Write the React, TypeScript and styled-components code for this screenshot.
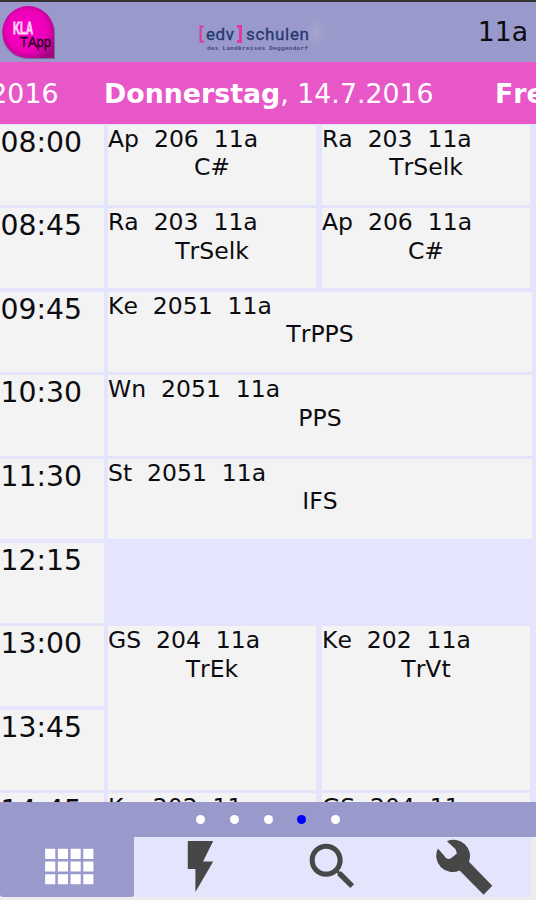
import { useState } from 'react';
import styled, { createGlobalStyle } from 'styled-components';

const GlobalStyle = createGlobalStyle`
  body {
    margin: 0;
    overflow: hidden;
    background-color: #ecebee;
    font-family: 'DejaVu Sans', sans-serif;
    font-kerning: none;
  }
`;
const Page = styled.div`
  display: flex;
  flex-direction: column;
  width: 536px;
  height: 900px;
  overflow: hidden;
  color: #0c0c10;
`;
const Header = styled.header`
  display: flex;
  align-items: center;
  box-sizing: border-box;
  height: 62px;
  flex-shrink: 0;
  border-top: 2px solid #35332f;
  padding-right: 8px;
  background-color: #9999cb;
`;
const AppLogo = styled.svg`
  width: 58px;
  height: 60px;
`;
const SchoolLogo = styled.svg`
  width: 150px;
  height: 60px;
  margin-left: 132px;
`;
const ClassName = styled.span`
  margin-left: auto;
  font-size: 26.7px;
  line-height: 60px;
`;
const DayBar = styled.div`
  display: flex;
  height: 62px;
  flex-shrink: 0;
  overflow: hidden;
  background-color: #e857c8;
  color: #fff;
  font-size: 26.8px;
  line-height: 63px;
  white-space: nowrap;
`;
const PrevDay = styled.div`
  display: flex;
  justify-content: flex-end;
  width: 58.5px;
  flex-shrink: 0;
`;
const CurrentDay = styled.div`
  width: 391px;
  flex-shrink: 0;
  padding-left: 45.5px;
  box-sizing: border-box;
`;
const NextDay = styled.div`
  padding-left: 45.5px;
`;
const Table = styled.div`
  display: grid;
  grid-template-columns: 108px 214px 210px;
  grid-auto-rows: 83.6px;
  flex: 1;
  min-height: 0;
  overflow: hidden;
  padding-top: 0.7px;
  background-color: #e4e4fc;
`;
const Time = styled.div<{ $row: number }>`
  grid-column: 1;
  grid-row: ${({ $row }) => $row};
  margin: 0 4px 3.5px 0;
  padding: 1px 0 0 0.5px;
  background-color: #f3f3f3;
  font-size: 28.3px;
  line-height: 34px;
`;
const Lesson = styled.div<{ $row: number; $col: number; $wide?: boolean; $span?: number }>`
  grid-column: ${({ $col, $wide }) => `${$col} / span ${$wide ? 2 : 1}`};
  grid-row: ${({ $row, $span }) => `${$row} / span ${$span || 1}`};
  margin-right: ${({ $col, $wide }) => ($wide ? 0 : $col === 2 ? 6 : 2)}px;
  margin-bottom: 3.5px;
  background-color: #f3f3f3;
  font-size: 23.5px;
  line-height: 28.2px;
`;
const Info = styled.div`
  white-space: pre;
`;
const Subject = styled.div`
  padding-top: 0.2px;
  text-align: center;
`;
const Pager = styled.div`
  display: flex;
  align-items: center;
  justify-content: center;
  gap: 24.6px;
  height: 35px;
  flex-shrink: 0;
  background-color: #9999cb;
`;
const Dot = styled.span<{ $active: boolean }>`
  width: 9px;
  height: 9px;
  border-radius: 50%;
  background-color: ${({ $active }) => ($active ? '#0000fa' : '#fff')};
`;
const TabBar = styled.nav`
  display: grid;
  grid-template-columns: 134px 1fr 1fr 1fr;
  width: 531px;
  height: 60px;
  flex-shrink: 0;
  margin-bottom: 3px;
  background-color: #e4e4fc;
`;
const Tab = styled.button<{ $active: boolean }>`
  display: flex;
  align-items: center;
  justify-content: center;
  box-sizing: border-box;
  height: 60px;
  border: none;
  border-radius: 0 0 3px 3px;
  padding: 0 0 2px;
  cursor: pointer;
  background-color: ${({ $active }) => ($active ? '#9999cb' : 'transparent')};
  color: ${({ $active }) => ($active ? '#fff' : '#474747')};

  svg {
    width: 61px;
    height: 61px;
    flex-shrink: 0;
    fill: currentColor;
  }
`;

const times = ['08:00', '08:45', '09:45', '10:30', '11:30', '12:15', '13:00', '13:45', '14:45'];

const lessons = [
  { row: 1, col: 2, info: 'Ap  206  11a', subject: 'C#' },
  { row: 1, col: 3, info: 'Ra  203  11a', subject: 'TrSelk' },
  { row: 2, col: 2, info: 'Ra  203  11a', subject: 'TrSelk' },
  { row: 2, col: 3, info: 'Ap  206  11a', subject: 'C#' },
  { row: 3, col: 2, wide: true, info: 'Ke  2051  11a', subject: 'TrPPS' },
  { row: 4, col: 2, wide: true, info: 'Wn  2051  11a', subject: 'PPS' },
  { row: 5, col: 2, wide: true, info: 'St  2051  11a', subject: 'IFS' },
  { row: 7, col: 2, span: 2, info: 'GS  204  11a', subject: 'TrEk' },
  { row: 7, col: 3, span: 2, info: 'Ke  202  11a', subject: 'TrVt' },
  { row: 9, col: 2, info: 'Ke  202  11a', subject: '' },
  { row: 9, col: 3, info: 'GS  204  11a', subject: '' },
];

const tabs = [
  { name: 'table', box: '-0.2 0 24 24', path: 'M3 9h4V5H3zm0 5h4v-4H3zm5 0h4v-4H8zm5 0h4v-4h-4zM8 9h4V5H8zm5-4v4h4V5zm5 9h4v-4h-4zM3 19h4v-4H3zm5 0h4v-4H8zm5 0h4v-4h-4zm5 0h4v-4h-4zm0-14v4h4V5z' },
  { name: 'news', box: '0 0 24 24', path: 'M7 2v11h3v9l7-12h-4l4-8z' },
  { name: 'search', box: '0 0 24 24', path: 'M15.5 14h-.79l-.28-.27C15.41 12.59 16 11.11 16 9.5 16 5.91 13.09 3 9.5 3S3 5.91 3 9.5 5.91 16 9.5 16c1.61 0 3.09-.59 4.23-1.57l.27.28v.79l5 4.99L20.49 19zm-6 0C7.01 14 5 11.99 5 9.5S7.01 5 9.5 5 14 7.01 14 9.5 11.99 14 9.5 14z' },
  { name: 'settings', box: '13.2 10.5 183 183', path: 'M25 48L45 71Q50 83 63 78L82 63L78 50L52 26A49 49 0 0 1 118 88L188 160L162 187L90 114A49 49 0 0 1 25 48z' },
];

const App = () => {
  const [tab, setTab] = useState('table');
  const [day] = useState(3);

  return (
    <Page>
      <GlobalStyle />
      <Header>
        <AppLogo viewBox='0 2 58 60'>
          <defs>
            <radialGradient id='drop' cx='48%' cy='48%' r='60%'>
              <stop offset='0' stopColor='#f800c8' />
              <stop offset='0.65' stopColor='#ee00b8' />
              <stop offset='1' stopColor='#a0087e' />
            </radialGradient>
          </defs>
          <path d='M28 7a26 26 0 1 0 0 52h27V33A26.5 26 0 0 0 28 7z' fill='#66467f' opacity='0.6' />
          <path d='M28 6a25.5 26 0 1 0 0 52h26V32A26 26 0 0 0 28 6z' fill='url(#drop)' />
          <text x='13' y='33.5' fontSize='16' fontWeight='bold' fill='#fbd5f5' stroke='#fbd5f5' strokeWidth='0.8' textLength='20' lengthAdjust='spacingAndGlyphs' fontFamily='Liberation Sans, sans-serif'>KLA</text>
          <text x='20' y='46.5' fontSize='14' fill='#23001c' stroke='#23001c' strokeWidth='0.4' textLength='31' lengthAdjust='spacingAndGlyphs' fontFamily='Liberation Sans, sans-serif'>TApp</text>
        </AppLogo>
        <SchoolLogo viewBox='190 2 150 60'>
          <defs>
            <radialGradient id='glow'>
              <stop offset='0' stopColor='#adabd2' stopOpacity='0.7' />
              <stop offset='1' stopColor='#9999cb' stopOpacity='0' />
            </radialGradient>
          </defs>
          <ellipse cx='316' cy='32' rx='16' ry='26' fill='url(#glow)' />
          <path d='M204 26.5h-3.5v15h3.5' fill='none' stroke='#e0389f' strokeWidth='2' />
          <path d='M237 26.5h3.5v15H237' fill='none' stroke='#e0389f' strokeWidth='3' />
          <text x='206' y='39.5' fontSize='17' fill='#24386f' stroke='#24386f' strokeWidth='0.3' textLength='28' fontFamily='Roboto, sans-serif'>edv</text>
          <text x='246' y='39.5' fontSize='17' fill='#24386f' stroke='#24386f' strokeWidth='0.3' textLength='63' fontFamily='Roboto, sans-serif'>schulen</text>
          <text x='207' y='49.5' fontSize='6' fontWeight='bold' fill='#3c4580' textLength='101' fontFamily='Liberation Mono, monospace'>des Landkreises Deggendorf</text>
        </SchoolLogo>
        <ClassName>11a</ClassName>
      </Header>
      <DayBar>
        <PrevDay>2016</PrevDay>
        <CurrentDay><b>Donnerstag</b>, 14.7.2016</CurrentDay>
        <NextDay><b>Freitag</b></NextDay>
      </DayBar>
      <Table>
        {times.map((time, i) => <Time key={time} $row={i + 1}>{time}</Time>)}
        {lessons.map((el) => (
          <Lesson key={`${el.row}-${el.col}`} $row={el.row} $col={el.col} $wide={el.wide} $span={el.span}>
            <Info>{el.info}</Info>
            <Subject>{el.subject}</Subject>
          </Lesson>
        ))}
      </Table>
      <Pager>
        {[0, 1, 2, 3, 4].map((el) => <Dot key={el} $active={el === day} />)}
      </Pager>
      <TabBar>
        {tabs.map((el) => (
          <Tab key={el.name} type='button' $active={tab === el.name} onClick={() => setTab(el.name)}>
            <svg viewBox={el.box}><path d={el.path} /></svg>
          </Tab>
        ))}
      </TabBar>
    </Page>
  );
};

export default App;
